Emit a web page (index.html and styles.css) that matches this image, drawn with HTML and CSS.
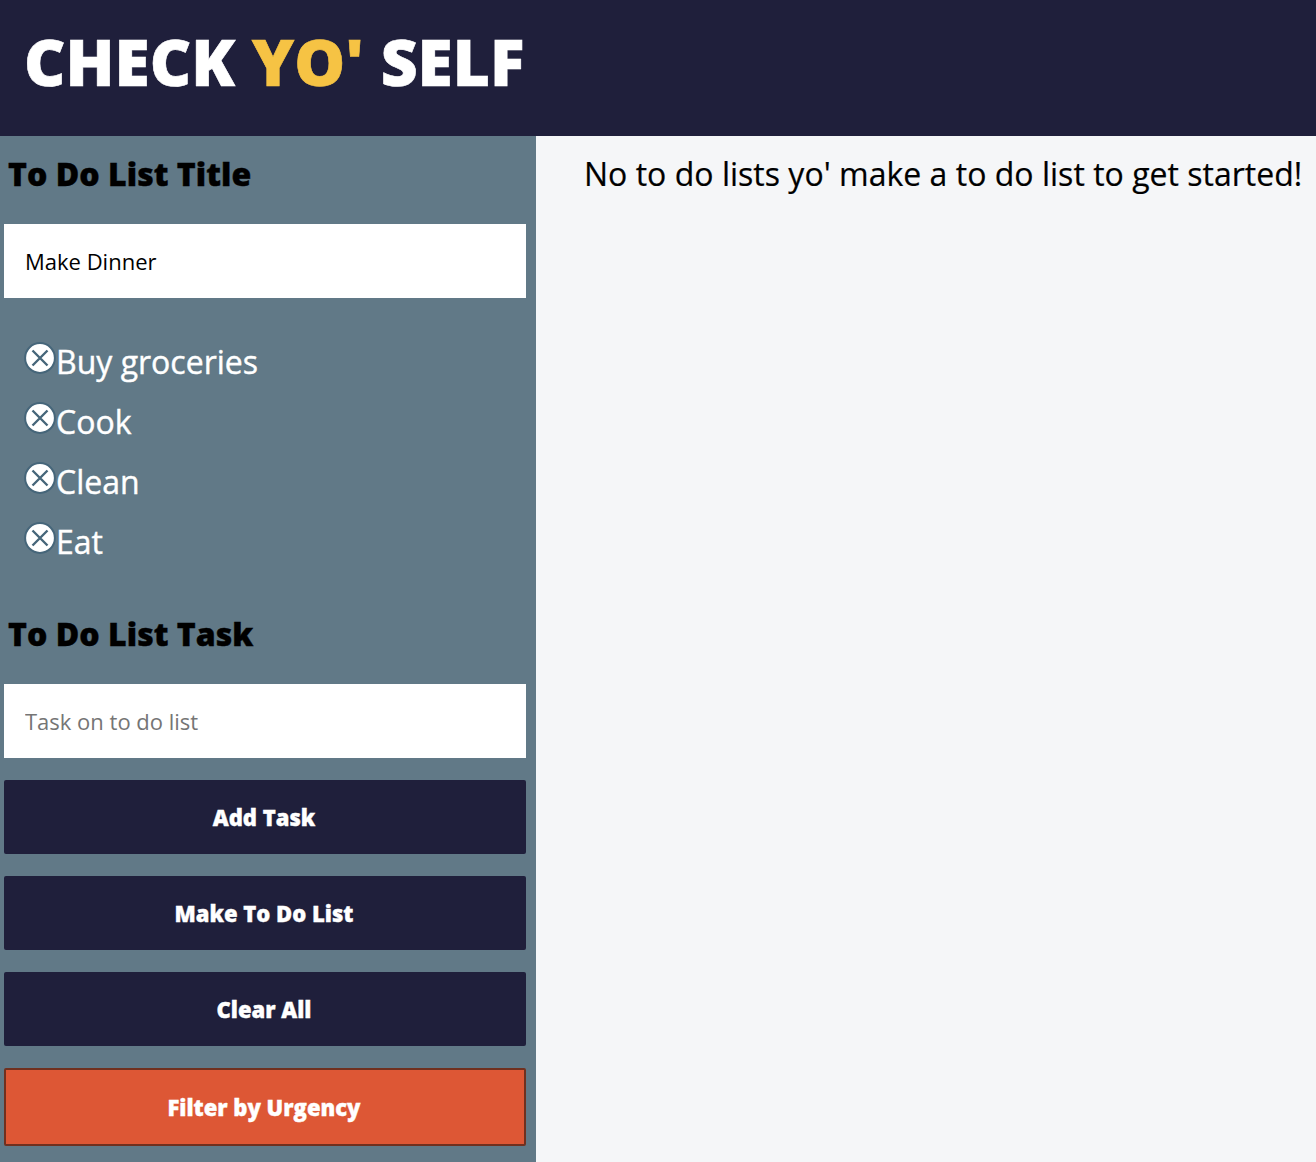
FILE: index.html
```html
<!DOCTYPE html>
<html lang="en">
<head>
<meta charset="utf-8">
<title>Check Yo' Self</title>
<link rel="stylesheet" href="styles.css">
</head>
<body>
<svg class="defs" width="0" height="0" aria-hidden="true">
  <symbol id="delete" viewBox="0 0 32 32">
    <circle cx="16" cy="16" r="14.9" fill="#fff" stroke="#46667a" stroke-width="2"/>
    <path d="M8.5 8.5l15 15M23.5 8.5l-15 15" stroke="#46667a" stroke-width="2.4" fill="none"/>
  </symbol>
</svg>
<header class="header">
  <h1 class="logo">CHECK <span class="accent">YO'</span> SELF</h1>
</header>
<div class="layout">
  <aside class="sidebar">
    <label class="label" for="title">To Do List Title</label>
    <input class="field" id="title" type="text" value="Make Dinner">
    <ul class="tasks">
      <li class="task"><svg class="icon"><use href="#delete"/></svg><span>Buy groceries</span></li>
      <li class="task"><svg class="icon"><use href="#delete"/></svg><span>Cook</span></li>
      <li class="task"><svg class="icon"><use href="#delete"/></svg><span>Clean</span></li>
      <li class="task"><svg class="icon"><use href="#delete"/></svg><span>Eat</span></li>
    </ul>
    <label class="label" for="task">To Do List Task</label>
    <input class="field" id="task" type="text" placeholder="Task on to do list">
    <button class="button">Add Task</button>
    <button class="button">Make To Do List</button>
    <button class="button">Clear All</button>
    <button class="button filter">Filter by Urgency</button>
  </aside>
  <main class="main">
    <p class="empty">No to do lists yo' make a to do list to get started!</p>
  </main>
</div>
</body>
</html>
```

FILE: styles.css
```css
* { box-sizing: border-box; }
body {
  margin: 0;
  min-height: 1162px;
  display: flex;
  flex-direction: column;
  font-family: "Open Sans", sans-serif;
}
.defs { display: none; }
.header {
  height: 136px;
  padding: 18px 24px 0;
  background: #1f1f3b;
}
.logo {
  margin: 0;
  font-size: 64px;
  line-height: 88px;
  font-weight: 800;
  color: #fff;
  white-space: nowrap;
  -webkit-text-stroke: 0.6px;
}
.accent { color: #f6c344; }
.layout { display: flex; flex: 1; }
.sidebar {
  display: flex;
  flex-direction: column;
  width: 536px;
  padding: 16px 10px 0 4px;
  background: #617987;
}
.label {
  padding-left: 4px;
  font-size: 32px;
  line-height: 44px;
  font-weight: 800;
  letter-spacing: 0.04px;
  color: #000;
  -webkit-text-stroke: 0.4px;
}
.field {
  width: 522px;
  height: 74px;
  margin: 28px 0 0;
  padding: 0 21px;
  border: 0;
  background: #fff;
  color: #000;
  font: 22px "Open Sans", sans-serif;
}
.field::placeholder { color: #757575; }
.tasks {
  margin: 34px 0 40px;
  padding: 0 0 0 20px;
  height: 240px;
  list-style: none;
}
.task {
  display: flex;
  height: 60px;
  padding-top: 8px;
  font-size: 32px;
  line-height: 44px;
  color: #fff;
  -webkit-text-stroke: 0.4px;
}
.icon { width: 32px; height: 32px; margin-top: 2px; }
.button {
  height: 74px;
  margin-top: 22px;
  padding: 0 2px 0 0;
  border: 0;
  border-radius: 2px;
  background: #1f1f3b;
  color: #fff;
  font: 800 22px "Open Sans", sans-serif;
  -webkit-text-stroke: 0.4px;
}
.filter {
  height: 78px;
  border: 2px solid #70301f;
  background: #dd5735;
}
.main {
  flex: 1;
  padding: 16px 0 0 48px;
  background: #f5f6f8;
}
.empty {
  margin: 0;
  font-size: 32px;
  line-height: 44px;
  letter-spacing: 0.015px;
  color: #000;
  white-space: nowrap;
  -webkit-text-stroke: 0.2px;
}
```
